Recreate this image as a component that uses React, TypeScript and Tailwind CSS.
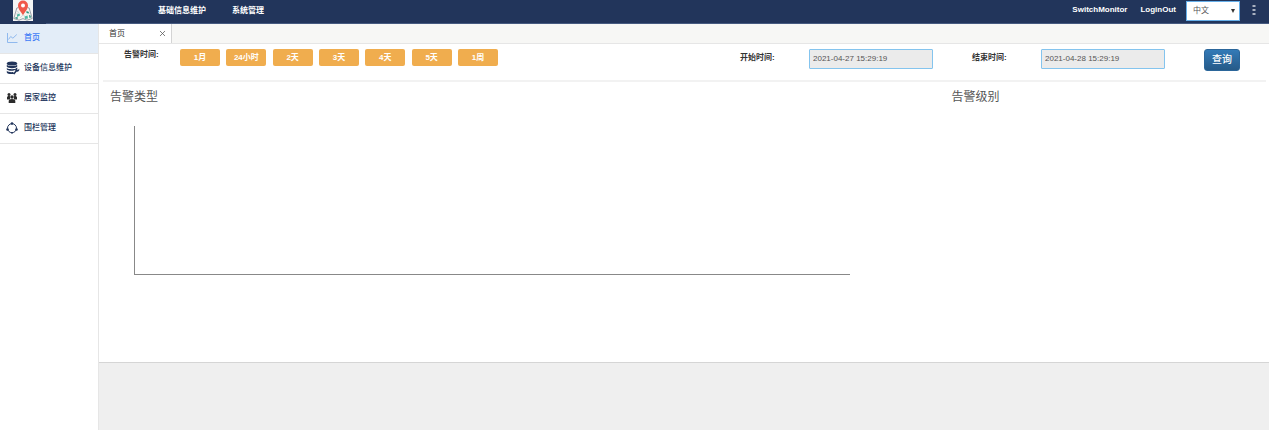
import * as React from 'react'
import { X } from 'lucide-react'

const ranges = ['1月', '24小时', '2天', '3天', '4天', '5天', '1周']

function LogoMark() {
  return (
    <svg viewBox="0 0 20 21" className="w-5 h-[21px] block" aria-hidden="true">
      <rect width="20" height="21" fill="#f4f5f5" />
      <path d="M5.500 7.500 3.800 8 .8 18.500 6 20.200l4-1.600 4 1.600 5.200-1.700L16.200 8l-1.700-.5" fill="#f6f4f1" stroke="#5a6475" strokeWidth=".6" />
      <path d="m3.500 11 2.500 1.500-3.500 2M13 12l4 1.500M7 18l3-3 2 1" stroke="#cfd6da" strokeWidth=".8" fill="none" />
      <path d="m4 14.500 2.500-1 .5 2-3 1.500zM11.500 16.500l3-1 .5 3-3 .5z" fill="#4fb6a4" />
      <path d="m13.500 11 2.500 1-.5 1.500-2-.5zM2.500 17l2.500.5-.5 1.500-2-.5zM16 15l1.500.5.500 2-1.500.5z" fill="#2a9580" />
      <path d="M10 15.500C8.800 12.500 5 9.500 5 5.500a5 5 0 0 1 10 0c0 4-3.800 7-5 10z" fill="#f0584a" />
      <circle cx="10" cy="5.500" r="2" fill="#fff" />
    </svg>
  )
}

function ChartIcon() {
  return (
    <svg viewBox="0 0 12 12" className="w-3 h-3" fill="none" stroke="#8fb9ee" strokeWidth="1" aria-hidden="true">
      <path d="M1.500 1v9.500h10" />
      <path d="m2.500 7.500 2.200-3 2.200 1.700L10.800 2.500" />
    </svg>
  )
}

function DatabaseIcon() {
  return (
    <svg viewBox="0 0 14 14" className="w-[14px] h-[14px]" fill="#22355b" aria-hidden="true">
      <ellipse cx="6" cy="2.500" rx="5.200" ry="2" />
      <path d="M.8 3.800c1 1.600 9.400 1.600 10.400 0v2c-1 1.800-9.400 1.800-10.400 0z" />
      <path d="M.8 7c1 1.600 9.400 1.600 10.400 0l-.6 1.200-2.800 1.300c-2.800.6-6.200.2-7-1.200z" />
      <path d="M.8 9.800c1 1.400 4.200 1.600 6.400 1.300l1 1.600c-2.800.8-6.800.4-7.400-1.200z" />
      <path d="M13.200 7.600a2.200 2.200 0 0 1-2.600 2.900l-2.200 2.900-1.300-.9 2.200-2.900a2.200 2.200 0 0 1 2.300-3l-.6 1.500.9.600z" transform="translate(0 .2)" />
    </svg>
  )
}

function PeopleIcon() {
  return (
    <svg viewBox="0 0 12 12" className="w-3 h-3" fill="#2b2b2b" aria-hidden="true">
      <circle cx="3" cy="2.400" r="1.500" />
      <circle cx="9" cy="2.400" r="1.500" />
      <path d="M1 7.200V5.600c0-1 .8-1.500 2-1.500.5 0 .9.100 1.200.300L4 7.400H1.200zM11 7.200V5.600c0-1-.8-1.500-2-1.500-.5 0-.9.100-1.200.300L8 7.400h2.800z" />
      <circle cx="6" cy="5" r="1.700" />
      <path d="M2.700 11V9c0-1.300 1-2 3.300-2s3.300.7 3.300 2v2z" />
    </svg>
  )
}

function FenceIcon() {
  return (
    <svg viewBox="0 0 12 12" className="w-3 h-3" fill="#22355b" aria-hidden="true">
      <circle cx="6" cy="6.200" r="4.500" fill="none" stroke="#22355b" strokeWidth="1" />
      <circle cx="6" cy="1.500" r="1.300" />
      <circle cx="1.500" cy="7.500" r="1.300" />
      <circle cx="10.500" cy="7.500" r="1.300" />
      <circle cx="6" cy="10.800" r=".9" />
    </svg>
  )
}

const menu = [
  { label: '首页', icon: <ChartIcon />, active: true },
  { label: '设备信息维护', icon: <DatabaseIcon />, active: false },
  { label: '居家监控', icon: <PeopleIcon />, active: false },
  { label: '围栏管理', icon: <FenceIcon />, active: false },
]

function Header() {
  return (
    <header className="flex h-6 bg-[#22355b] text-white text-[8px] font-bold leading-3">
      <a href="#" aria-label="首页" className="w-[46px] pl-[13px] overflow-hidden">
        <LogoMark />
      </a>
      <div className="flex-1 flex items-start border-b border-[#465a80]">
        <nav className="flex gap-[26px] pl-28 pt-[5px]">
          <a href="#">基础信息维护</a>
          <a href="#">系统管理</a>
        </nav>
        <div className="ml-auto flex items-start pr-[13px]">
          <a href="#" className="mt-1 mr-[13px]">SwitchMonitor</a>
          <a href="#" className="mt-1 mr-[10px]">LoginOut</a>
          <div className="relative mt-px">
            <select
              aria-label="语言"
              className="block appearance-none w-[54px] h-5 pl-[6px] bg-white border border-[#66afe9] text-[8px] font-normal text-[#555]"
            >
              <option>中文</option>
              <option>English</option>
            </select>
            <svg viewBox="0 0 4 4" className="absolute right-[5px] top-2 w-1 h-1 pointer-events-none" fill="#333" aria-hidden="true">
              <path d="M0 0h4L2 4z" />
            </svg>
          </div>
          <button aria-label="更多" className="ml-3 mt-1">
            <svg viewBox="0 0 4 12" className="w-1 h-3 block" fill="#a9b1c0" aria-hidden="true">
              <path d="M.5 1h3v2h-3zM.5 5h3v2h-3zM.5 9h3v2h-3z" />
            </svg>
          </button>
        </div>
      </div>
    </header>
  )
}

function Sidebar() {
  return (
    <aside className="w-[99px] shrink-0 bg-white border-r border-[#e6e6e6]">
      {menu.map((item) => (
        <a
          key={item.label}
          href="#"
          className={
            item.active
              ? 'flex items-center h-[30px] pl-[6px] pb-px border-b border-[#e6e6e6] bg-[#e3edf8] text-[#3f7cf6]'
              : 'flex items-center h-[30px] pl-[6px] pb-px border-b border-[#e6e6e6] text-[#22355b]'
          }
        >
          <span className="w-[18px] flex items-center">{item.icon}</span>
          <span className="text-[8px] font-medium">{item.label}</span>
        </a>
      ))}
    </aside>
  )
}

function DateField({ id, label, value }: { id: string; label: string; value: string }) {
  return (
    <div className="flex w-[232px]">
      <label htmlFor={id} className="w-[69px] leading-3 mt-[3px] font-bold">
        {label}
      </label>
      <input
        id={id}
        readOnly
        defaultValue={value}
        className="w-[124px] h-5 px-[3px] pb-px bg-[#ebebeb] border border-[#84c4ee] rounded-[1px] text-[8px] text-[#555] outline-none"
      />
    </div>
  )
}

export default function App() {
  const [range, setRange] = React.useState('')

  return (
    <div className="min-h-screen flex flex-col bg-white text-[#333] text-[8px] font-['Liberation_Sans','Noto_Sans_CJK_SC',sans-serif]">
      <Header />
      <div className="flex-1 flex">
        <Sidebar />
        <main className="flex-1 min-w-0 flex flex-col">
          <div className="flex h-5 bg-[#f7f7f5] border-b border-[#e6e6e6]">
            <div className="flex items-center justify-between w-[73px] pl-[10px] pr-1 bg-white border-r border-[#d4d4d4]">
              <span>首页</span>
              <button aria-label="关闭">
                <X size={9} strokeWidth={2} color="#555" />
              </button>
            </div>
          </div>

          {/* filters */}
          <form className="flex items-start ml-1 mr-[3px] h-[38px] pt-[5px] border-b-2 border-[#f2f2f2]" onSubmit={(e) => e.preventDefault()}>
            <span className="w-[77px] pl-[21px] leading-3 font-bold">告警时间:</span>
            <div className="flex justify-between w-[318px]">
              {ranges.map((r) => (
                <button
                  key={r}
                  type="button"
                  aria-pressed={range === r}
                  onClick={() => setRange(r)}
                  className="w-10 h-[17px] rounded-[2px] bg-[#f0ad4e] text-white font-bold leading-4"
                >
                  {r}
                </button>
              ))}
            </div>
            <div className="ml-auto flex">
              <DateField id="start" label="开始时间:" value="2021-04-27 15:29:19" />
              <DateField id="end" label="结束时间:" value="2021-04-28 15:29:19" />
              <button
                type="submit"
                className="w-9 h-[22px] mr-[26px] rounded-[3px] border border-[#2b669a] bg-linear-to-b from-[#337ab7] to-[#265a88] text-white text-[10px] font-medium leading-5"
              >
                查询
              </button>
            </div>
          </form>

          <div className="flex h-[280px] pt-[5px] text-[12px] leading-5 text-[#555]">
            <section className="w-[72%] pl-[11px]">
              <h2>告警类型</h2>
              <svg className="block mt-[19px] ml-6 w-[calc(100%-115px)] h-[150px]" aria-hidden="true">
                <line x1="0.5" y1="0" x2="0.5" y2="149" stroke="#888" />
                <line x1="0" y1="148.5" x2="100%" y2="148.5" stroke="#888" />
              </svg>
            </section>
            <section className="flex-1 pl-[10px]">
              <h2>告警级别</h2>
            </section>
          </div>

          <div className="flex-1 bg-[#efefef] border-t border-[#d5d5d5]" />
        </main>
      </div>
    </div>
  )
}
